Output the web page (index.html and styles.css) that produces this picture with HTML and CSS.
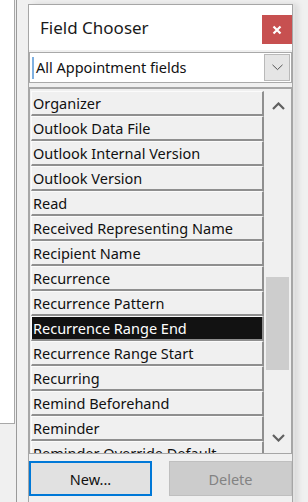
FILE: index.html
```html
<!DOCTYPE html>
<html>
<head>
<meta charset="utf-8">
<link rel="stylesheet" href="styles.css">
</head>
<body>
<div class="backwin">
  <div class="backpane"></div>
  <div class="backline"></div>
</div>
<div class="dialog">
  <div class="titlebar">
    <span class="title">Field Chooser</span>
    <button class="close" aria-label="Close">
      <svg width="10" height="10" viewBox="0 0 10 10"><path d="M1.5 1.5 L8.5 8.5 M8.5 1.5 L1.5 8.5" stroke="#fff" stroke-width="2.2" fill="none"/></svg>
    </button>
  </div>
  <div class="body">
    <div class="combo">
      <span class="caret"></span>
      <span class="combo-text">All Appointment fields</span>
      <span class="combo-btn">
        <svg width="11" height="7" viewBox="0 0 11 7"><path d="M0.5 0.8 L5.5 5.6 L10.5 0.8" stroke="#555" stroke-width="1" fill="none"/></svg>
      </span>
    </div>
    <div class="list">
      <div class="items">
        <div class="item">Organizer</div>
        <div class="item">Outlook Data File</div>
        <div class="item">Outlook Internal Version</div>
        <div class="item">Outlook Version</div>
        <div class="item">Read</div>
        <div class="item">Received Representing Name</div>
        <div class="item">Recipient Name</div>
        <div class="item">Recurrence</div>
        <div class="item">Recurrence Pattern</div>
        <div class="item selected">Recurrence Range End</div>
        <div class="item">Recurrence Range Start</div>
        <div class="item">Recurring</div>
        <div class="item">Remind Beforehand</div>
        <div class="item">Reminder</div>
        <div class="item">Reminder Override Default</div>
      </div>
      <div class="scrollbar">
        <div class="arrow up"><svg width="13" height="8" viewBox="0 0 13 8"><path d="M1 7 L6.5 1.5 L12 7" stroke="#606060" stroke-width="2.2" fill="none"/></svg></div>
        <div class="track">
          <div class="thumb"></div>
        </div>
        <div class="arrow down"><svg width="13" height="8" viewBox="0 0 13 8"><path d="M1 1 L6.5 6.5 L12 1" stroke="#606060" stroke-width="2.2" fill="none"/></svg></div>
      </div>
    </div>
    <div class="buttons">
      <button class="btn primary">New...</button>
      <button class="btn disabled">Delete</button>
    </div>
  </div>
</div>
</body>
</html>
```
FILE: styles.css
```css
html, body {
  margin: 0;
  padding: 0;
}
body {
  width: 308px;
  height: 502px;
  overflow: hidden;
  background: #f0f0f0;
  font-family: "Noto Sans", "Open Sans", sans-serif;
  display: flex;
  position: relative;
}
.backwin {
  width: 17px;
  height: 502px;
  display: flex;
  flex-shrink: 0;
}
.backpane {
  width: 14px;
  height: 423px;
  background: #ffffff;
  border-right: 1px solid #a8a8a8;
  border-bottom: 1px solid #a8a8a8;
}
.backline {
  width: 1px;
  margin-left: 1px;
  height: 502px;
  background: #9a9a9a;
}
.dialog {
  margin-left: 11px;
  margin-top: 4px;
  width: 263px;
  height: 510px;
  border: 1px solid #a6a6a6;
  border-bottom: none;
  background: #f0f0f0;
  box-shadow: 2px 0 0 #e2e2e2, 5px 0 6px rgba(0,0,0,0.10);
  display: flex;
  flex-direction: column;
}
.titlebar {
  height: 45px;
  background: #ffffff;
  display: flex;
  align-items: flex-start;
  justify-content: space-between;
}
.title {
  font-size: 17px;
  color: #1a1a1a;
  margin-left: 11px;
  margin-top: 12px;
  line-height: 22px;
}
.close {
  width: 30px;
  height: 29px;
  margin-top: 10px;
  margin-right: 0;
  border: none;
  padding: 0;
  background: #c75050;
  display: flex;
  align-items: center;
  justify-content: center;
}
.body {
  display: flex;
  flex-direction: column;
  padding-top: 2px;
}
.combo {
  height: 29px;
  border: 1px solid #a9a9a9;
  background: #ffffff;
  display: flex;
  align-items: center;
  position: relative;
}
.caret {
  width: 2px;
  height: 22px;
  background: #7fb0e0;
  margin-left: 2px;
}
.combo-text {
  font-size: 14.5px;
  color: #111;
  margin-left: 2px;
  margin-top: -1px;
  flex: 1;
}
.combo-btn {
  width: 24px;
  height: 25px;
  margin-right: 1px;
  background: #e5e5e5;
  border: 1px solid #b9b9b9;
  display: flex;
  align-items: center;
  justify-content: center;
}
.list {
  margin-top: 4px;
  height: 364px;
  border: 1px solid #a6a6a6;
  border-top: 2px solid #a6a6a6;
  background: #f0f0f0;
  display: flex;
  overflow: hidden;
}
.items {
  width: 234px;
  padding-left: 1px;
  padding-top: 2px;
  display: flex;
  flex-direction: column;
}
.item {
  flex-shrink: 0;
  height: 22px;
  line-height: 22px;
  border-top: 1px solid #fbfbfb;
  border-left: 1px solid #fbfbfb;
  border-right: 2px solid #8f8f8f;
  border-bottom: 2px solid #8f8f8f;
  background: #f0f0f0;
  font-size: 14.5px;
  color: #111;
  padding-left: 1px;
  white-space: nowrap;
  overflow: hidden;
}
.item.selected {
  background: #121212;
  color: #ffffff;
}
.scrollbar {
  width: 26px;
  margin-left: 1px;
  display: flex;
  flex-direction: column;
  background: #f0f0f0;
}
.arrow {
  height: 30px;
  display: flex;
  align-items: center;
  justify-content: center;
}
.arrow.up {
  padding-top: 2px;
}
.track {
  flex: 1;
  display: flex;
  flex-direction: column;
  padding-top: 156px;
}
.thumb {
  height: 93px;
  margin: 0 2px 0 1px;
  background: #cdcdcd;
}
.buttons {
  display: flex;
  justify-content: space-between;
  margin-top: 7px;
}
.btn {
  width: 123px;
  height: 35px;
  font-family: "Noto Sans", "Open Sans", sans-serif;
  font-size: 14.5px;
  padding: 0;
}
.btn.primary {
  background: #e1e1e1;
  border: 2px solid #0078d7;
  color: #111;
}
.btn.disabled {
  background: #cccccc;
  border: 1px solid #bfbfbf;
  color: #838383;
}
```
